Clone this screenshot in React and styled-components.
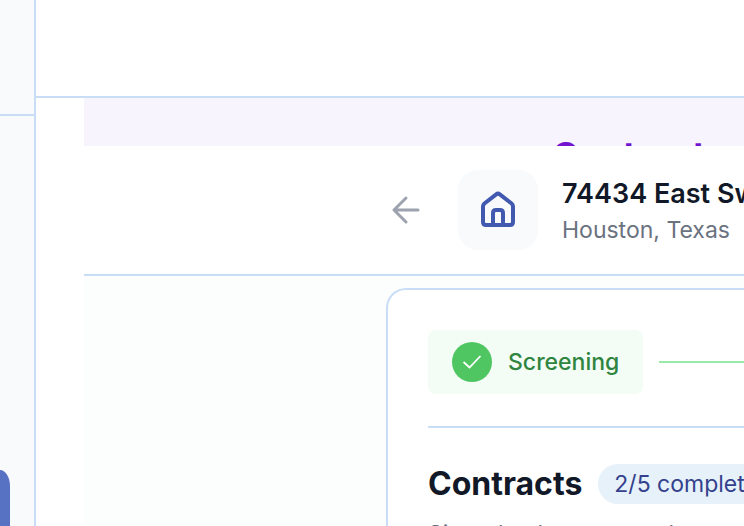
import React from 'react';
import styled, { createGlobalStyle, ThemeProvider } from 'styled-components';

const theme = {
    colors: {
        line: '#c9def6',
        panel: '#f8fafc',
        ink: '#111827',
        muted: '#6b7280',
        indigo: '#4259b0',
        green: '#50c662',
        darkGreen: '#2f8540',
        paleGreen: '#f3fdf5',
    },
};

const GlobalStyle = createGlobalStyle`
    * { box-sizing: border-box; }
    body {
        margin: 0;
        overflow: hidden;
        background: #fff;
        font-family: Inter, "Liberation Sans", sans-serif;
    }
    h1, h2, p { margin: 0; }
`;

const Layout = styled.div`
    display: flex;
    height: 100vh;
    overflow: hidden;
`;

const Sidebar = styled.aside`
    display: flex;
    flex-direction: column;
    justify-content: space-between;
    flex: none;
    width: 36px;
    background: ${({theme}) => theme.colors.panel};
    border-right: 2px solid ${({theme}) => theme.colors.line};
`;

const SidebarHead = styled.div`
    height: 116px;
    border-bottom: 2px solid ${({theme}) => theme.colors.line};
`;

const SidebarButton = styled.button`
    width: 10px;
    height: 56px;
    padding: 0;
    border: none;
    border-radius: 0 10px 0 0 / 0 16px 0 0;
    background: #5872c3;
`;

const Main = styled.main`
    flex: 1;
    min-width: 0;
`;

const TopBar = styled.header`
    height: 98px;
    border-bottom: 2px solid ${({theme}) => theme.colors.line};
`;

const Content = styled.div`
    margin-left: 48px;
`;

const Banner = styled.div`
    height: 48px;
    padding: 33px 0 0 468px;
    overflow: hidden;
    background: #f7f4fe;
    color: #7213d0;
    font-size: 36px;
    font-weight: 700;
    line-height: 48px;
`;

const PropertyBar = styled.div`
    display: flex;
    align-items: center;
    height: 130px;
    padding-left: 302px;
    border-bottom: 2px solid ${({theme}) => theme.colors.line};
    white-space: nowrap;
`;

const BackButton = styled.button`
    display: flex;
    padding: 0;
    border: none;
    background: none;
    color: #9ca3af;
`;

const HomeTile = styled.div`
    display: flex;
    align-items: center;
    justify-content: center;
    flex: none;
    width: 80px;
    height: 80px;
    margin: 0 24px 0 32px;
    border-radius: 20px;
    background: ${({theme}) => theme.colors.panel};
    color: ${({theme}) => theme.colors.indigo};
`;

const Address = styled.h1`
    color: ${({theme}) => theme.colors.ink};
    font-size: 27px;
    font-weight: 600;
    line-height: 40px;
`;

const City = styled.p`
    color: ${({theme}) => theme.colors.muted};
    font-size: 23px;
    line-height: 32px;
`;

const Body = styled.div`
    padding: 12px 0 0 302px;
    background: #fcfefd;
`;

const Card = styled.section`
    height: 600px;
    padding: 40px 0 0 40px;
    border: 2px solid ${({theme}) => theme.colors.line};
    border-right: none;
    border-radius: 20px 0 0 0;
    background: #fff;
    white-space: nowrap;
`;

const Steps = styled.div`
    display: flex;
    align-items: center;
    gap: 16px;
    padding-bottom: 32px;
    border-bottom: 2px solid ${({theme}) => theme.colors.line};
`;

const Step = styled.div`
    display: flex;
    align-items: center;
    gap: 16px;
    height: 64px;
    padding: 0 24px;
    border-radius: 8px;
    background: ${({theme}) => theme.colors.paleGreen};
    color: ${({theme}) => theme.colors.darkGreen};
    font-size: 23px;
    font-weight: 500;
    line-height: 32px;
`;

const CheckCircle = styled.span`
    display: flex;
    align-items: center;
    justify-content: center;
    width: 40px;
    height: 40px;
    border-radius: 50%;
    background: ${({theme}) => theme.colors.green};
    color: #fff;
`;

const Connector = styled.div`
    flex: 1;
    height: 2px;
    background: #98eaa9;
`;

const TitleRow = styled.div`
    display: flex;
    align-items: center;
    gap: 16px;
    padding-top: 36px;
`;

const Title = styled.h2`
    color: ${({theme}) => theme.colors.ink};
    font-size: 32px;
    font-weight: 700;
    line-height: 40px;
`;

const Badge = styled.span`
    height: 40px;
    padding: 0 16px;
    border-radius: 20px;
    background: #e6f1fa;
    color: #34418c;
    font-size: 23px;
    line-height: 40px;
`;

const Description = styled.p`
    margin-top: 14px;
    color: ${({theme}) => theme.colors.muted};
    font-size: 23px;
    line-height: 32px;
`;

const ArrowIcon = () => (
    <svg width="40" height="40" viewBox="0 0 40 40" fill="none" stroke="currentColor" strokeWidth="3" strokeLinecap="round" strokeLinejoin="round">
        <path d="M32 20H8M20 8L8 20l12 12" />
    </svg>
);

const HomeIcon = () => (
    <svg width="40" height="40" viewBox="0 0 40 40" fill="none" stroke="currentColor" strokeWidth="4" strokeLinecap="round" strokeLinejoin="round">
        <path d="M5 16.500q0-1.800 1.400-3L18.200 4.400q1.800-1.500 3.600 0L33.600 13.500q1.400 1.200 1.400 3V32q0 3-3 3H8q-3 0-3-3z" />
        <path d="M15 35V23q0-3 3-3h4q3 0 3 3v12" />
    </svg>
);

const CheckIcon = () => (
    <svg width="20" height="16" viewBox="0 0 20 16" fill="none" stroke="currentColor" strokeWidth="1.800">
        <path d="M1.500 8l6 5.500L18.500 2" />
    </svg>
);

const App = () => {
    return (
        <ThemeProvider theme={theme}>
            <GlobalStyle />
            <Layout>
                <Sidebar>
                    <SidebarHead />
                    <SidebarButton aria-label="Menu" />
                </Sidebar>
                <Main>
                    <TopBar />
                    <Content>
                        <Banner>Contracts</Banner>
                        <PropertyBar>
                            <BackButton aria-label="Back"><ArrowIcon /></BackButton>
                            <HomeTile><HomeIcon /></HomeTile>
                            <div>
                                <Address>74434 East Sweetwater</Address>
                                <City>Houston, Texas</City>
                            </div>
                        </PropertyBar>
                        <Body>
                            <Card>
                                <Steps>
                                    <Step>
                                        <CheckCircle><CheckIcon /></CheckCircle>
                                        Screening
                                    </Step>
                                    <Connector />
                                </Steps>
                                <TitleRow>
                                    <Title>Contracts</Title>
                                    <Badge>2/5 completed</Badge>
                                </TitleRow>
                                <Description>Signed to be approved</Description>
                            </Card>
                        </Body>
                    </Content>
                </Main>
            </Layout>
        </ThemeProvider>
    );
};

export default App;
